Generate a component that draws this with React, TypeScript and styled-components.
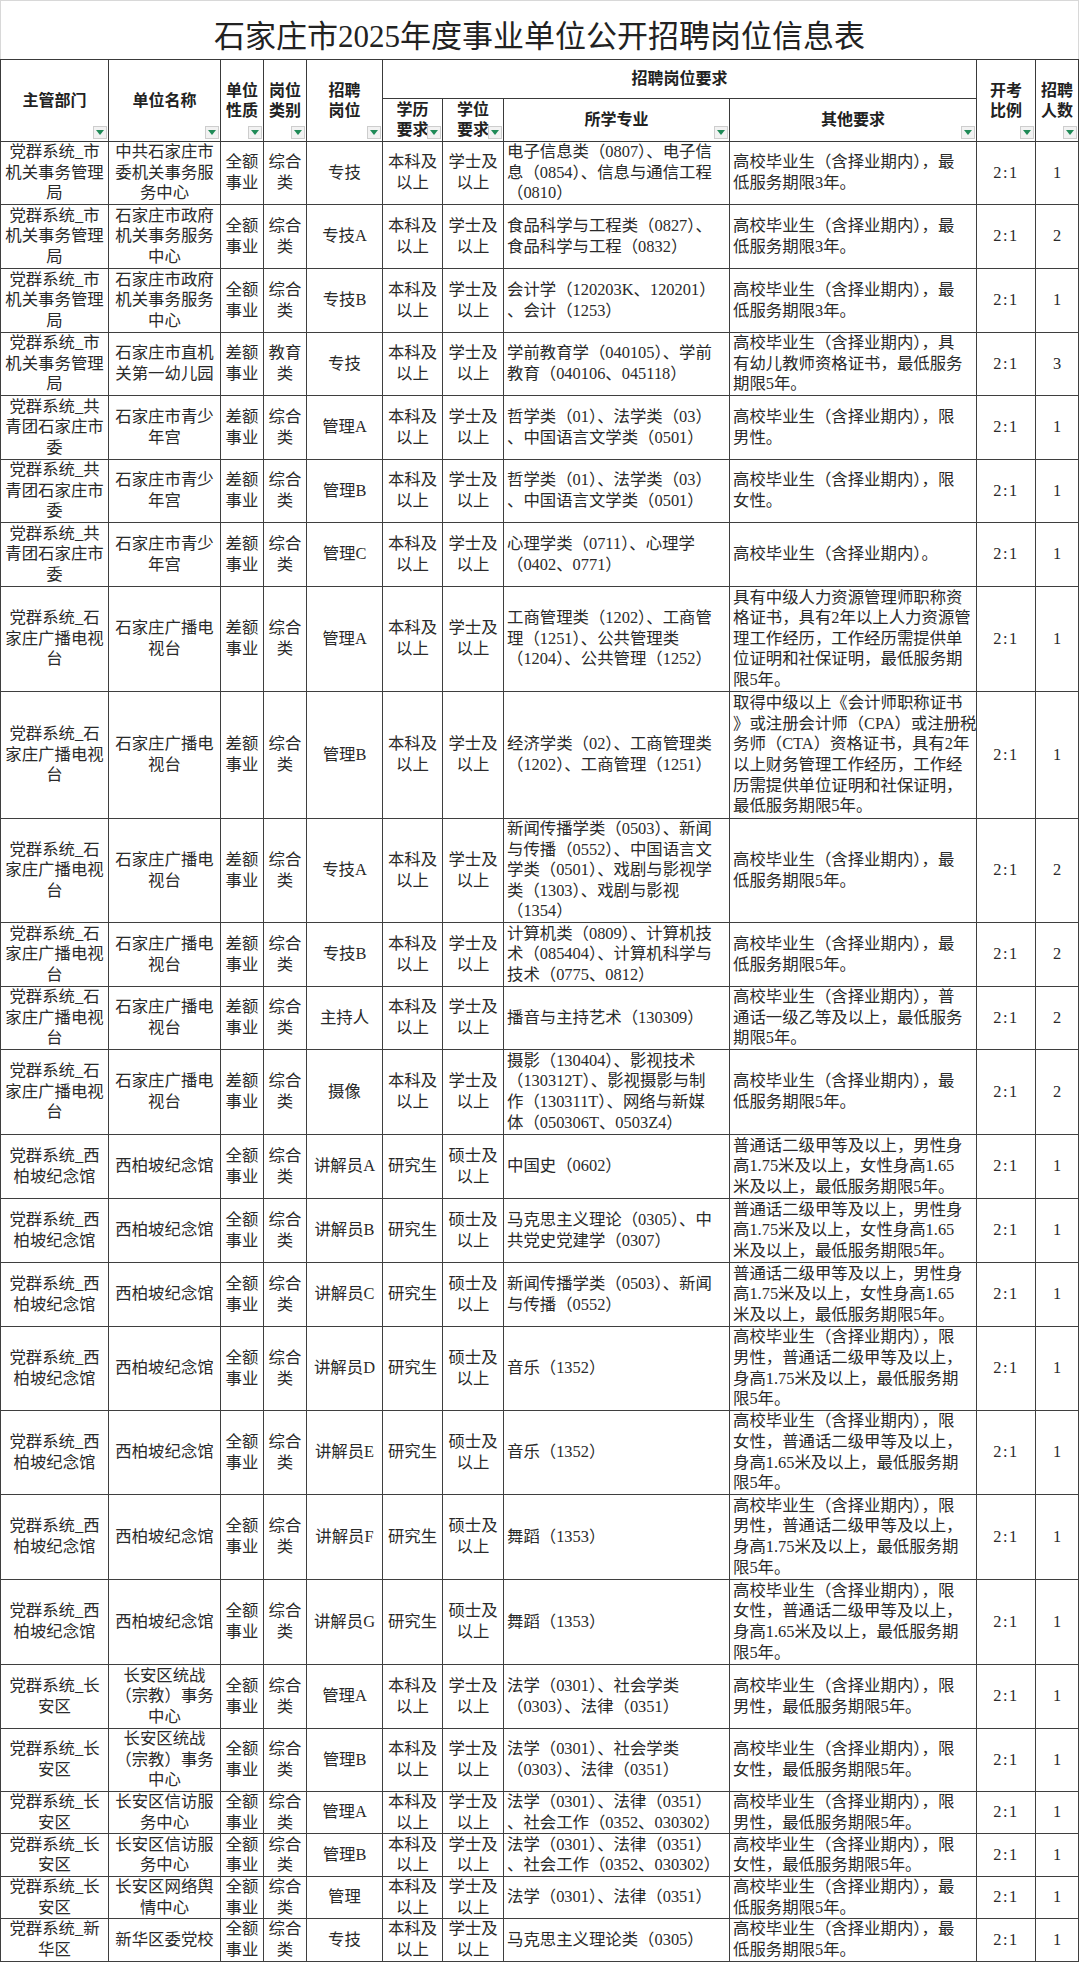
import React from "react";
import styled, { createGlobalStyle } from "styled-components";

const GlobalStyle = createGlobalStyle`
  html, body {
    margin: 0;
    padding: 0;
    background: #fff;
  }
  body {
    font-family: "Liberation Serif", "Noto Sans CJK SC", serif;
    color: #2b2b2b;
  }
`;

const COLS = [108, 112, 43, 43, 76, 60, 61, 226, 247, 59, 43];

const Sheet = styled.div`
  width: 1079px;
`;

const Title = styled.div`
  height: 59px;
  box-sizing: border-box;
  border: 1px solid #d8d8d8;
  border-bottom: none;
  display: flex;
  align-items: center;
  justify-content: center;
  padding-top: 6px;
  font-size: 31px;
  color: #222;
`;

const Grid = styled.table`
  border-collapse: collapse;
  table-layout: fixed;
  width: 1078px;
`;

const Row = styled.tr<{ $h: number }>`
  height: ${(p) => p.$h}px;
`;

const HeadCell = styled.th`
  position: relative;
  border: 1px solid #3a3a3a;
  padding: 0 2px;
  font-family: "Liberation Sans", "Noto Sans CJK SC", sans-serif;
  font-weight: 700;
  font-size: 16px;
  line-height: 20px;
  color: #222;
  white-space: pre;
  text-align: center;
  vertical-align: middle;
`;

// excel-style autofilter dropdown sitting over the header cell corner
const Filter = styled.span`
  position: absolute;
  right: 1px;
  bottom: 2px;
  width: 14px;
  height: 13px;
  box-sizing: border-box;
  background: #f2f2f2;
  border: 1px solid #cdcdcd;
  display: flex;
  align-items: center;
  justify-content: center;

  svg {
    display: block;
  }
`;

type Kind = "text" | "para" | "ratio";

const Cell = styled.td<{ $kind: Kind }>`
  border: 1px solid #3f3f3f;
  padding: 0 3px;
  font-size: 16.4px;
  line-height: 20.6px;
  white-space: pre;
  overflow: hidden;
  text-align: ${(p) => (p.$kind === "para" ? "left" : "center")};
  letter-spacing: ${(p) => (p.$kind === "ratio" ? "1.6px" : "0")};
  vertical-align: middle;
  color: #2a2a2a;
`;

const FilterButton = () => (
  <Filter>
    <svg width="8" height="5" viewBox="0 0 8 5">
      <polygon points="0,0 8,0 4,5" fill="#1f8a57" />
    </svg>
  </Filter>
);

const D_JG = "党群系统_市\n机关事务管理\n局";
const D_GQT = "党群系统_共\n青团石家庄市\n委";
const D_GB = "党群系统_石\n家庄广播电视\n台";
const D_XBP = "党群系统_西\n柏坡纪念馆";
const D_CA = "党群系统_长\n安区";
const U_GB = "石家庄广播电\n视台";
const U_XBP = "西柏坡纪念馆";
const QE = "全额\n事业";
const CE = "差额\n事业";
const ZH = "综合\n类";
const BK = "本科及\n以上";
const XS = "学士及\n以上";
const SS = "硕士及\n以上";
const MIN3 = "高校毕业生（含择业期内），最\n低服务期限3年。";
const MIN5 = "高校毕业生（含择业期内），最\n低服务期限5年。";
const PTH =
  "普通话二级甲等及以上，男性身\n高1.75米及以上，女性身高1.65\n米及以上，最低服务期限5年。";
const male = (h: string) =>
  `高校毕业生（含择业期内），限\n男性，普通话二级甲等及以上，\n身高${h}米及以上，最低服务期\n限5年。`;
const female = (h: string) =>
  `高校毕业生（含择业期内），限\n女性，普通话二级甲等及以上，\n身高${h}米及以上，最低服务期\n限5年。`;

type Post = {
  h: number;
  cells: string[];
};

const posts: Post[] = [
  { h: 63, cells: [D_JG, "中共石家庄市\n委机关事务服\n务中心", QE, ZH, "专技", BK, XS, "电子信息类（0807）、电子信\n息（0854）、信息与通信工程\n（0810）", MIN3, "2:1", "1"] },
  { h: 64, cells: [D_JG, "石家庄市政府\n机关事务服务\n中心", QE, ZH, "专技A", BK, XS, "食品科学与工程类（0827）、\n食品科学与工程（0832）", MIN3, "2:1", "2"] },
  { h: 64, cells: [D_JG, "石家庄市政府\n机关事务服务\n中心", QE, ZH, "专技B", BK, XS, "会计学（120203K、120201）\n、会计（1253）", MIN3, "2:1", "1"] },
  { h: 63, cells: [D_JG, "石家庄市直机\n关第一幼儿园", CE, "教育\n类", "专技", BK, XS, "学前教育学（040105）、学前\n教育（040106、045118）", "高校毕业生（含择业期内），具\n有幼儿教师资格证书，最低服务\n期限5年。", "2:1", "3"] },
  { h: 64, cells: [D_GQT, "石家庄市青少\n年宫", CE, ZH, "管理A", BK, XS, "哲学类（01）、法学类（03）\n、中国语言文学类（0501）", "高校毕业生（含择业期内），限\n男性。", "2:1", "1"] },
  { h: 63, cells: [D_GQT, "石家庄市青少\n年宫", CE, ZH, "管理B", BK, XS, "哲学类（01）、法学类（03）\n、中国语言文学类（0501）", "高校毕业生（含择业期内），限\n女性。", "2:1", "1"] },
  { h: 64, cells: [D_GQT, "石家庄市青少\n年宫", CE, ZH, "管理C", BK, XS, "心理学类（0711）、心理学\n（0402、0771）", "高校毕业生（含择业期内）。", "2:1", "1"] },
  { h: 105, cells: [D_GB, U_GB, CE, ZH, "管理A", BK, XS, "工商管理类（1202）、工商管\n理（1251）、公共管理类\n（1204）、公共管理（1252）", "具有中级人力资源管理师职称资\n格证书，具有2年以上人力资源管\n理工作经历，工作经历需提供单\n位证明和社保证明，最低服务期\n限5年。", "2:1", "1"] },
  { h: 127, cells: [D_GB, U_GB, CE, ZH, "管理B", BK, XS, "经济学类（02）、工商管理类\n（1202）、工商管理（1251）", "取得中级以上《会计师职称证书\n》或注册会计师（CPA）或注册税\n务师（CTA）资格证书，具有2年\n以上财务管理工作经历，工作经\n历需提供单位证明和社保证明，\n最低服务期限5年。", "2:1", "1"] },
  { h: 104, cells: [D_GB, U_GB, CE, ZH, "专技A", BK, XS, "新闻传播学类（0503）、新闻\n与传播（0552）、中国语言文\n学类（0501）、戏剧与影视学\n类（1303）、戏剧与影视\n（1354）", MIN5, "2:1", "2"] },
  { h: 64, cells: [D_GB, U_GB, CE, ZH, "专技B", BK, XS, "计算机类（0809）、计算机技\n术（085404）、计算机科学与\n技术（0775、0812）", MIN5, "2:1", "2"] },
  { h: 63, cells: [D_GB, U_GB, CE, ZH, "主持人", BK, XS, "播音与主持艺术（130309）", "高校毕业生（含择业期内），普\n通话一级乙等及以上，最低服务\n期限5年。", "2:1", "2"] },
  { h: 85, cells: [D_GB, U_GB, CE, ZH, "摄像", BK, XS, "摄影（130404）、影视技术\n（130312T）、影视摄影与制\n作（130311T）、网络与新媒\n体（050306T、0503Z4）", MIN5, "2:1", "2"] },
  { h: 64, cells: [D_XBP, U_XBP, QE, ZH, "讲解员A", "研究生", SS, "中国史（0602）", PTH, "2:1", "1"] },
  { h: 64, cells: [D_XBP, U_XBP, QE, ZH, "讲解员B", "研究生", SS, "马克思主义理论（0305）、中\n共党史党建学（0307）", PTH, "2:1", "1"] },
  { h: 64, cells: [D_XBP, U_XBP, QE, ZH, "讲解员C", "研究生", SS, "新闻传播学类（0503）、新闻\n与传播（0552）", PTH, "2:1", "1"] },
  { h: 84, cells: [D_XBP, U_XBP, QE, ZH, "讲解员D", "研究生", SS, "音乐（1352）", male("1.75"), "2:1", "1"] },
  { h: 84, cells: [D_XBP, U_XBP, QE, ZH, "讲解员E", "研究生", SS, "音乐（1352）", female("1.65"), "2:1", "1"] },
  { h: 85, cells: [D_XBP, U_XBP, QE, ZH, "讲解员F", "研究生", SS, "舞蹈（1353）", male("1.75"), "2:1", "1"] },
  { h: 85, cells: [D_XBP, U_XBP, QE, ZH, "讲解员G", "研究生", SS, "舞蹈（1353）", female("1.65"), "2:1", "1"] },
  { h: 64, cells: [D_CA, "长安区统战\n（宗教）事务\n中心", QE, ZH, "管理A", BK, XS, "法学（0301）、社会学类\n（0303）、法律（0351）", "高校毕业生（含择业期内），限\n男性，最低服务期限5年。", "2:1", "1"] },
  { h: 63, cells: [D_CA, "长安区统战\n（宗教）事务\n中心", QE, ZH, "管理B", BK, XS, "法学（0301）、社会学类\n（0303）、法律（0351）", "高校毕业生（含择业期内），限\n女性，最低服务期限5年。", "2:1", "1"] },
  { h: 42, cells: [D_CA, "长安区信访服\n务中心", QE, ZH, "管理A", BK, XS, "法学（0301）、法律（0351）\n、社会工作（0352、030302）", "高校毕业生（含择业期内），限\n男性，最低服务期限5年。", "2:1", "1"] },
  { h: 43, cells: [D_CA, "长安区信访服\n务中心", QE, ZH, "管理B", BK, XS, "法学（0301）、法律（0351）\n、社会工作（0352、030302）", "高校毕业生（含择业期内），限\n女性，最低服务期限5年。", "2:1", "1"] },
  { h: 42, cells: [D_CA, "长安区网络舆\n情中心", QE, ZH, "管理", BK, XS, "法学（0301）、法律（0351）", MIN5, "2:1", "1"] },
  { h: 42, cells: ["党群系统_新\n华区", "新华区委党校", QE, ZH, "专技", BK, XS, "马克思主义理论类（0305）", MIN5, "2:1", "1"] },
];

const kindOf = (i: number): Kind => (i === 7 || i === 8 ? "para" : i === 9 ? "ratio" : "text");

export default function App() {
  return (
    <>
      <GlobalStyle />
      <Sheet>
        <Title>石家庄市2025年度事业单位公开招聘岗位信息表</Title>
        <Grid>
          <colgroup>
            {COLS.map((w, i) => (
              <col key={i} width={w} />
            ))}
          </colgroup>
          <thead>
            <Row $h={39}>
              <HeadCell rowSpan={2}>主管部门<FilterButton /></HeadCell>
              <HeadCell rowSpan={2}>单位名称<FilterButton /></HeadCell>
              <HeadCell rowSpan={2}>{"单位\n性质"}<FilterButton /></HeadCell>
              <HeadCell rowSpan={2}>{"岗位\n类别"}<FilterButton /></HeadCell>
              <HeadCell rowSpan={2}>{"招聘\n岗位"}<FilterButton /></HeadCell>
              <HeadCell colSpan={4}>招聘岗位要求</HeadCell>
              <HeadCell rowSpan={2}>{"开考\n比例"}<FilterButton /></HeadCell>
              <HeadCell rowSpan={2}>{"招聘\n人数"}<FilterButton /></HeadCell>
            </Row>
            <Row $h={43}>
              <HeadCell>{"学历\n要求"}<FilterButton /></HeadCell>
              <HeadCell>{"学位\n要求"}<FilterButton /></HeadCell>
              <HeadCell>所学专业<FilterButton /></HeadCell>
              <HeadCell>其他要求<FilterButton /></HeadCell>
            </Row>
          </thead>
          <tbody>
            {posts.map((p, r) => (
              <Row key={r} $h={p.h}>
                {p.cells.map((c, i) => (
                  <Cell key={i} $kind={kindOf(i)}>
                    {c}
                  </Cell>
                ))}
              </Row>
            ))}
          </tbody>
        </Grid>
      </Sheet>
    </>
  );
}
